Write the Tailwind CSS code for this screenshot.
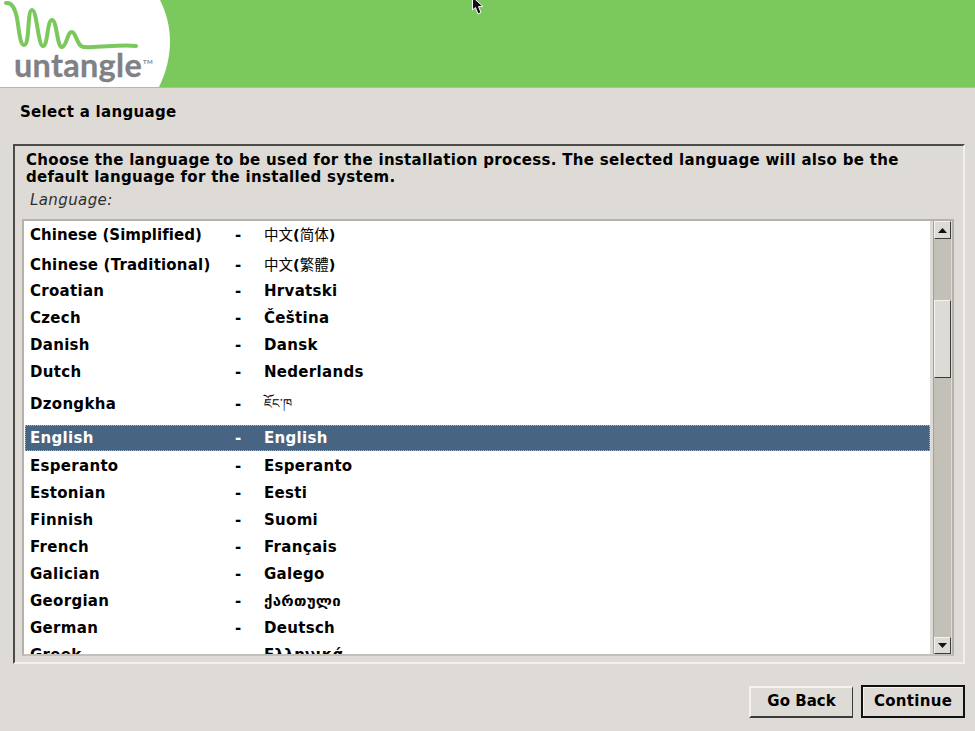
<!doctype html>
<html><head><meta charset="utf-8">
<script src="https://cdn.jsdelivr.net/npm/@tailwindcss/browser@4"></script>
</head>
<body class="m-0 overflow-hidden">
<div class="relative w-[975px] h-[731px] bg-[#dedbd6] text-black font-['DejaVu_Sans','Noto_Sans_CJK_SC',sans-serif] font-bold text-[15px] tracking-[0.3px]">
  <header class="h-[88px] bg-[#7bc85c] border-b border-[#93d27a]">
    <svg width="180" height="87" viewBox="0 0 180 87" class="block">
      <path d="M0 0H160C173 26 174 56 159 87H0Z" fill="#fff"/>
      <path d="M6 3C12 2 15 8 17 18C19 30 20 45 24 45C30 45 27 10 32 10C37 10 38 46 43 46C48 46 47 20 52 20C57 20 57 48 62 47C67 46 67 32 72 32C76 32 77 47 84 47C100 48 120 44 136 46" fill="none" stroke="#7bc85c" stroke-width="4" stroke-linecap="round"/>
      <text x="14" y="77" font-family="Lato" font-weight="700" font-size="32" fill="#808185" stroke="#808185" stroke-width="0.3" textLength="128" lengthAdjust="spacingAndGlyphs">untangle</text>
      <text x="143" y="64" font-family="Lato" font-weight="700" font-size="6" fill="#808185">TM</text>
    </svg>
  </header>
  <h1 class="h-[46px] pl-5 pt-[15px] text-[15px] leading-[18px] font-bold">Select a language</h1>
  <section class="ml-[13px] mr-[10px] mt-[10px] h-[520px] border-2 border-t-[#4a4a46] border-l-[#4a4a46] border-r-[#f2f0ec] border-b-[#f2f0ec] pt-[6px]">
    <p class="pl-[11px] text-[15px] leading-[17px]">Choose the language to be used for the installation process. The selected language will also be the<br>default language for the installed system.</p>
    <p class="pl-[15px] mt-[5px] h-[18px] text-[15px] leading-[18px] italic font-normal text-[#2e2e2e] tracking-[0.4px]">Language:</p>
    <div class="ml-[7px] mt-[10px] w-[932px] h-[437px] border-2 border-[#b4b2aa] border-b-[#c2c0b8] flex bg-[#dedbd6]">
      <ul class="w-[906px] h-full bg-white overflow-hidden leading-[18px] text-[15px]">
        <li class="h-[26px] pt-[2px] pl-[6px] flex items-center"><span class="w-[205px] tracking-[0.05px]">Chinese (Simplified)</span><span class="w-[29px]">-</span><span class="font-normal text-[14.5px] tracking-normal">中文<b>(</b>简体<b>)</b></span></li>
        <li class="h-[30px] pt-[6px] pl-[6px] flex items-center"><span class="w-[205px] tracking-[0.2px]">Chinese (Traditional)</span><span class="w-[29px]">-</span><span class="font-normal text-[14.5px] tracking-normal">中文<b>(</b>繁體<b>)</b></span></li>
        <li class="h-[27px] pl-[6px] flex items-center"><span class="w-[205px]">Croatian</span><span class="w-[29px]">-</span><span>Hrvatski</span></li>
        <li class="h-[27px] pl-[6px] flex items-center"><span class="w-[205px]">Czech</span><span class="w-[29px]">-</span><span>Čeština</span></li>
        <li class="h-[27px] pl-[6px] flex items-center"><span class="w-[205px]">Danish</span><span class="w-[29px]">-</span><span>Dansk</span></li>
        <li class="h-[27px] pl-[6px] flex items-center"><span class="w-[205px]">Dutch</span><span class="w-[29px]">-</span><span>Nederlands</span></li>
        <li class="h-[40px] pb-[2px] pl-[6px] flex items-center"><span class="w-[205px]">Dzongkha</span><span class="w-[29px]">-</span><span class="font-normal font-['Noto_Sans','DejaVu_Sans',sans-serif] text-[13px] tracking-normal -mt-[2px]">ཇོང་ཁ</span></li>
        <li class="h-[26px] mb-[1px] ml-[1px] pl-[5px] flex items-center bg-[#476583] text-white outline-1 outline-dotted -outline-offset-1 outline-[#9fb1c2]"><span class="w-[205px]">English</span><span class="w-[29px]">-</span><span>English</span></li>
        <li class="h-[27px] pl-[6px] flex items-center"><span class="w-[205px]">Esperanto</span><span class="w-[29px]">-</span><span>Esperanto</span></li>
        <li class="h-[27px] pl-[6px] flex items-center"><span class="w-[205px]">Estonian</span><span class="w-[29px]">-</span><span>Eesti</span></li>
        <li class="h-[27px] pl-[6px] flex items-center"><span class="w-[205px]">Finnish</span><span class="w-[29px]">-</span><span>Suomi</span></li>
        <li class="h-[27px] pl-[6px] flex items-center"><span class="w-[205px]">French</span><span class="w-[29px]">-</span><span>Français</span></li>
        <li class="h-[27px] pl-[6px] flex items-center"><span class="w-[205px]">Galician</span><span class="w-[29px]">-</span><span>Galego</span></li>
        <li class="h-[27px] pl-[6px] flex items-center"><span class="w-[205px]">Georgian</span><span class="w-[29px]">-</span><span>ქართული</span></li>
        <li class="h-[27px] pl-[6px] flex items-center"><span class="w-[205px]">German</span><span class="w-[29px]">-</span><span>Deutsch</span></li>
        <li class="h-[27px] pl-[6px] flex items-center"><span class="w-[205px]">Greek</span><span class="w-[29px]">-</span><span>Ελληνικά</span></li>
      </ul>
      <div class="ml-[3px] w-[18px] h-full bg-[#c3c0b8] border-l border-[#a3a199] flex flex-col">
        <div class="h-[18px] bg-[#dedbd6] border border-t-[#f4f3f0] border-l-[#f4f3f0] border-r-[#3c3c3a] border-b-[#3c3c3a] flex items-center justify-center">
          <svg width="9" height="5" viewBox="0 0 9 5"><path d="M4.5 0L9 5H0Z" fill="#111"/></svg>
        </div>
        <div class="mt-[61px] h-[78px] bg-[#dedbd6] border border-t-[#f4f3f0] border-l-[#f4f3f0] border-r-[#3c3c3a] border-b-[#3c3c3a]"></div>
        <div class="mt-auto h-[17px] bg-[#dedbd6] border border-t-[#f4f3f0] border-l-[#f4f3f0] border-r-[#3c3c3a] border-b-[#3c3c3a] flex items-center justify-center">
          <svg width="9" height="5" viewBox="0 0 9 5"><path d="M4.5 5L9 0H0Z" fill="#111"/></svg>
        </div>
      </div>
    </div>
  </section>
  <footer class="mt-[21px] mr-[10px] flex justify-end items-center gap-[8px]">
    <button class="w-[104px] h-[32px] bg-[#dedbd6] border border-t-2 border-l-2 border-t-[#f4f3f0] border-l-[#f4f3f0] border-r-[#3a3a38] border-b-2 border-b-[#3a3a38] font-bold text-[15px] tracking-normal">Go Back</button>
    <button class="w-[104px] h-[33px] bg-[#dedbd6] border-2 border-[#111] shadow-[inset_1px_1px_0_#f4f3f0] font-bold text-[15px] tracking-[0.3px]">Continue</button>
  </footer>
  <svg class="absolute left-[471px] top-0" width="14" height="16" viewBox="0 0 14 16"><path d="M1.5 -3V10L4.5 7.5L7 14L10 12.5L7.5 6.5H12Z" fill="#111" stroke="#fff" stroke-width="1"/></svg>
</div>
</body></html>
